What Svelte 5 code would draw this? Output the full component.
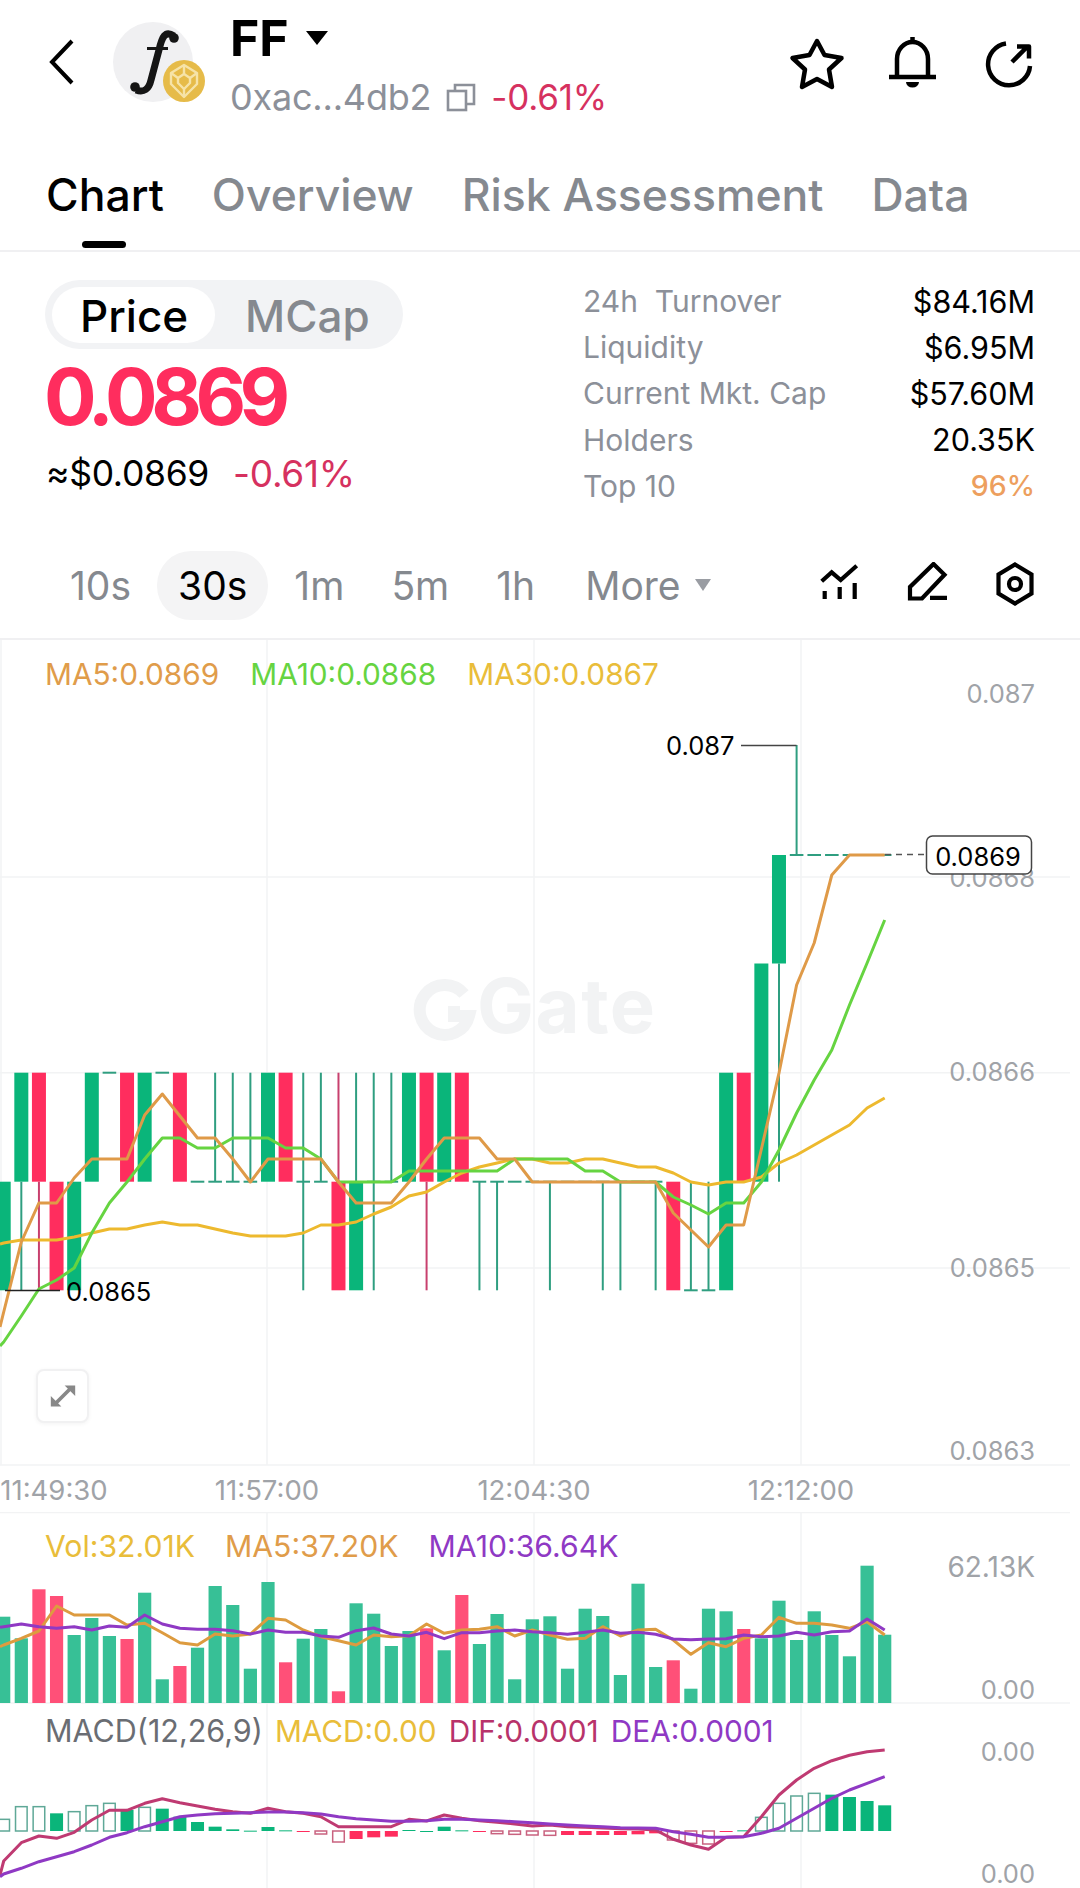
<script>
  const X = (k) => 3.7 + 17.62 * k;
  const L0 = 855, L1 = 963.5, L2 = 1072.7, L3 = 1181.7, L4 = 1290.3;
  const G = '#0ab57a', R = '#ff2d5e', GW = '#2f9e80', RW = '#c8406e';
  // [colour, bodyTop, bodyBottom, wickTop, wickBottom]
  const c = (col, a, b, wa, wb) => ({ col, a, b, wa, wb });
  const candles = [
    c('g',L3,L4), c('g',L2,L3,L3,L4), c('r',L2,L3,L3,L4), c('r',L3,L4), c('g',L3,L4), c('g',L2,L3),
    c('g',L2,L2), c('r',L2,L3), c('g',L2,L3), c('g',L2,L2), c('r',L2,L3), c('g',L3,L3),
    c('g',L3,L3,L2,L3), c('g',L3,L3,L2,L3), c('g',L3,L3,L2,L3), c('g',L2,L3), c('r',L2,L3),
    c('g',L3,L3,L2,L4), c('g',L3,L3,L2,L3), c('r',L3,L4,L2,L3), c('g',L3,L4,L2,L3),
    c('g',L3,L3,L2,L4), c('g',L3,L3,L2,L3), c('g',L2,L3), c('r',L2,L3,L3,L4), c('g',L2,L3), c('r',L2,L3),
    c('g',L3,L3,L3,L4), c('g',L3,L3,L3,L4), c('g',L3,L3), c('g',L3,L3), c('g',L3,L3,L3,L4), c('g',L3,L3), c('g',L3,L3),
    c('g',L3,L3,L3,L4), c('g',L3,L3,L3,L4), c('g',L3,L3), c('g',L3,L3,L3,L4), c('r',L3,L4),
    c('g',L4,L4,L3,L4), c('g',L4,L4,L3,L4), c('g',L2,L4), c('r',L2,L3), c('g',L1,L3), c('g',L0,L1,L1,L3),
    c('g',L0,L0,745,L0), c('g',L0,L0), c('g',L0,L0), c('g',L0,L0), c('g',L0,L0), c('g',L0,L0)
  ];
  // first value sits at the left edge (x=0), the rest one per candle
  const pts = (first, arr) => `0,${first} ` + arr.map((y, k) => `${X(k).toFixed(1)},${y}`).join(' ');
  const ma5 = [1312,1242,1203,1203,1178,1159,1159,1159,1115,1094,1116,1138,1138,1159,1182,1159,1159,1159,1159,1182,1203,1203,1203,1182,1159,1138,1138,1138,1159,1159,1182,1182,1182,1182,1182,1182,1182,1182,1213,1230,1247,1225,1225,1149,1073,985,943,875,855,855,855];
  const ma10 = [1342,1316,1289,1280,1268,1233,1203,1182,1159,1138,1138,1148,1148,1138,1138,1138,1148,1148,1159,1182,1182,1182,1182,1171,1171,1171,1171,1171,1171,1159,1159,1159,1159,1171,1171,1182,1182,1182,1197,1205,1214,1203,1203,1182,1150,1113,1080,1050,1005,963,920];
  const ma30 = [1243,1240,1240,1240,1237,1233,1229,1229,1225,1222,1225,1225,1229,1233,1236,1236,1236,1233,1225,1225,1222,1214,1207,1196,1192,1182,1173,1167,1163,1159,1159,1163,1163,1159,1159,1163,1167,1167,1173,1182,1185,1182,1182,1177,1163,1155,1145,1135,1125,1108,1098];

  const zv = (z) => +(1500 + z / 3).toFixed(1);
  const volRed = new Set([2,3,7,10,16,19,24,26,38,42]);
  const vols = [350,415,268,288,405,354,408,417,278,538,498,443,258,315,506,246,487,416,387,574,310,341,438,393,385,451,285,432,342,538,358,349,506,326,348,525,251,501,481,566,326,334,387,415,302,420,334,405,469,197,404].map(zv);
  const vma5 = [435,415,393,318,345,345,345,375,370,398,428,435,402,408,402,355,360,390,410,422,435,405,410,407,372,400,390,388,380,408,390,405,418,415,380,408,390,388,420,463,428,440,415,405,352,370,370,375,385,365,405].map(zv);
  const vma10 = [380,372,380,385,380,390,378,382,345,372,385,388,388,392,402,390,397,397,408,412,392,384,402,408,397,416,398,398,393,390,395,398,403,397,390,400,397,403,417,419,417,416,405,410,408,397,405,395,393,357,390].map(zv);

  // [z value, hollow?]; values below the base are red, above are green
  const BASE = 993;
  const macd = [[958,1],[920,1],[920,1],[940,0],[935,1],[917,1],[910,1],[930,0],[922,1],[926,0],[950,0],[966,0],[980,0],[988,0],[992,0],[981,0],[991,0],[996,0],[1002,1],[1026,1],[1017,0],[1012,0],[1010,0],[990,0],[993,0],[980,0],[991,0],[996,0],[1001,1],[1003,1],[1005,1],[1006,1],[1005,0],[1005,0],[1005,0],[1005,0],[1003,0],[1000,0],[1020,1],[1030,1],[1032,1],[996,0],[991,0],[952,1],[910,1],[888,1],[880,1],[884,0],[891,0],[903,0],[916,0]];
  const dif = [1083,1028,1008,1015,997,960,931,931,910,896,908,918,928,935,940,925,935,940,950,980,980,980,980,958,963,945,955,962,967,972,978,975,980,982,984,986,987,990,1018,1035,1048,1012,1010,950,885,840,805,782,766,755,750].map(zv);
  const dea = [1122,1105,1085,1070,1055,1035,1012,998,980,965,950,945,941,940,938,936,936,938,942,950,956,960,964,964,962,958,958,960,962,965,968,972,975,978,980,983,984,985,995,1003,1012,1012,1010,1000,985,955,925,895,870,850,830].map(zv);

  const stats = [
    ['24h  Turnover', '$84.16M', ''],
    ['Liquidity', '$6.95M', ''],
    ['Current Mkt. Cap', '$57.60M', ''],
    ['Holders', '20.35K', ''],
    ['Top 10', '96%', 'warn']
  ];
  const grids = [267, 534, 801];
</script>

<div class="page">
  <header class="top">
    <svg class="back" viewBox="0 0 28 46" aria-hidden="true"><path d="M24 2 4 23l20 21" /></svg>
    <div class="avatar">
      <svg viewBox="0 0 100 90" aria-hidden="true">
        <circle cx="41" cy="42" r="40" fill="#f0f0f2" />
        <g fill="none" stroke="#151515">
          <path d="M62 16C53 10 50 17 47 30L39 60C37 69 32 73 24 70" stroke-width="7" />
          <path d="M35 28.500h21" stroke-width="3" />
        </g>
        <circle cx="62" cy="18" r="4.800" fill="#151515" />
        <circle cx="23" cy="67" r="4.800" fill="#151515" />
        <circle cx="72" cy="61" r="21" fill="#e6bb49" />
        <g fill="none" stroke="#f6e3a8" stroke-width="2.400" stroke-linejoin="round">
          <path d="M72 45l13 8v11l-13 13-13-13V53z" />
          <path d="M72 54l6 4v5l-6 6-6-6v-5z" />
          <path d="M59 53l7 5M85 53l-7 5M72 45v9M72 69v8" />
        </g>
      </svg>
    </div>
    <div class="title">
      <div class="sym"><span>FF</span><i class="tri"></i></div>
      <div class="addr">
        <span>0xac...4db2</span>
        <svg class="copy" viewBox="0 0 30 29" aria-hidden="true">
          <rect x="2" y="8" width="18" height="19" /><path d="M9 8V2h19v19h-7" />
        </svg>
        <span class="chg">-0.61%</span>
      </div>
    </div>
    <div class="acts">
      <svg viewBox="0 0 60 60" aria-hidden="true"><path d="M30 9l7.500 14 17 3-12.500 11.500 3 17.500-15-8-15 8 3-17.500L5.500 26l17-3z" /></svg>
      <svg viewBox="0 0 60 60" aria-hidden="true">
        <path d="M14 44V27a15.500 17 0 0 1 31 0v17M6 45h47" /><path d="M29.500 5v3" />
        <path class="fill" d="M23 50h13a6.500 5.500 0 0 1-13 0z" />
      </svg>
      <svg viewBox="0 0 60 60" aria-hidden="true">
        <path d="M27 11.500A21 21 0 1 0 51 34" /><path d="M33 30l15-15M38 14.500h12v12" />
      </svg>
    </div>
  </header>

  <nav class="tabs">
    <span class="tab on">Chart</span>
    <span class="tab">Overview</span>
    <span class="tab">Risk Assessment</span>
    <span class="tab">Data</span>
  </nav>

  <section class="summary">
    <div class="left">
      <div class="toggle"><span class="seg on">Price</span><span class="seg">MCap</span></div>
      <div class="bigprice">0.0869</div>
      <div class="usd"><span>≈$0.0869</span><span class="chg">-0.61%</span></div>
    </div>
    <dl class="stats">
      {#each stats as s}
        <div class="row"><dt>{s[0]}</dt><dd class={s[2]}>{s[1]}</dd></div>
      {/each}
    </dl>
  </section>

  <div class="frames">
    <span class="fr">10s</span><span class="fr on">30s</span><span class="fr">1m</span><span class="fr">5m</span><span class="fr">1h</span>
    <span class="fr more">More<i class="tri small"></i></span>
    <div class="tools">
      <svg viewBox="0 0 40 40" aria-hidden="true"><path d="M2.700 19.300 12.700 10.300 21.700 18 37.700 3.700M5.700 29v8M20.700 25v12M35.700 21v16" /></svg>
      <svg viewBox="0 0 42 40" aria-hidden="true"><path d="M3 36.500V25L26.500 2l11 10.700L15 36.500zM23 35.800h17" /></svg>
      <svg viewBox="0 0 40 44" aria-hidden="true"><path d="M20 2.500l16.500 10v19L20 41.500l-16.500-10v-19z" /><circle cx="20" cy="22" r="6" /></svg>
    </div>
  </div>

  <section class="panel main">
    <div class="legend l-main">
      <span class="o">MA5:0.0869</span><span class="gr">MA10:0.0868</span><span class="y">MA30:0.0867</span>
    </div>
    <svg viewBox="0 640 1080 872" width="1080" height="872">
      {#each grids as g}<line x1={g} x2={g} y1="640" y2="1465" class="grid" />{/each}
      <line x1="1" x2="1" y1="640" y2="1465" class="grid" />
      {#each [877, 1072.700, 1268, 1465] as g}<line x1="0" x2="1070" y1={g} y2={g} class="grid" />{/each}

      <text x="477" y="1033" class="wm">Gate</text>
      <path d="M464 994a25 25 0 1 0 5 22h-15v-10" class="wmg" />

      {#each candles as d, k}
        {#if d.wa}<line x1={X(k)} x2={X(k)} y1={d.wa} y2={d.wb} stroke={d.col === 'r' ? RW : GW} stroke-width="2" />{/if}
        {#if d.a === d.b}
          <line x1={X(k) - 6.800} x2={X(k) + 6.800} y1={d.a} y2={d.a} stroke={GW} stroke-width="2" />
        {:else}
          <rect x={X(k) - 7} y={d.a} width="14" height={d.b - d.a} fill={d.col === 'r' ? R : G} />
        {/if}
      {/each}

      <polyline points={pts(1244, ma30)} class="ln" stroke="#edb92e" />
      <polyline points={pts(1346, ma10)} class="ln" stroke="#66d441" />
      <polyline points={pts(1327, ma5)} class="ln" stroke="#df9a48" />

      <path d="M741 745.500h55.500" stroke="#444" stroke-width="1.500" fill="none" />
      <text x="666" y="755" class="note">0.087</text>
      <line x1="5" x2="60" y1="1290.500" y2="1290.500" stroke="#222" stroke-width="1.500" />
      <text x="66" y="1301" class="note">0.0865</text>

      <text x="1035" y="703" class="ax" text-anchor="end">0.087</text>
      <text x="1035" y="887" class="ax" text-anchor="end">0.0868</text>
      <text x="1035" y="1081" class="ax" text-anchor="end">0.0866</text>
      <text x="1035" y="1277" class="ax" text-anchor="end">0.0865</text>
      <text x="1035" y="1460" class="ax" text-anchor="end">0.0863</text>

      <line x1="885" x2="926" y1="854.500" y2="854.500" stroke="#555" stroke-width="1.500" stroke-dasharray="6 5" />
      <rect x="926.500" y="836" width="105" height="38" rx="6" fill="#fff" stroke="#444" stroke-width="1.500" />
      <text x="978" y="866" class="note" text-anchor="middle">0.0869</text>

      <text x="54" y="1500" class="tm" text-anchor="middle">11:49:30</text>
      <text x="267" y="1500" class="tm" text-anchor="middle">11:57:00</text>
      <text x="534" y="1500" class="tm" text-anchor="middle">12:04:30</text>
      <text x="801" y="1500" class="tm" text-anchor="middle">12:12:00</text>
    </svg>
    <button class="expand" aria-label="Expand">
      <svg viewBox="0 0 32 32" aria-hidden="true">
        <path d="M18 3h13v13zM1 16v13h13z" fill="#888" /><path d="M8 24 24 8" stroke="#888" stroke-width="4.500" />
      </svg>
    </button>
  </section>

  <section class="panel">
    <div class="legend l-vol">
      <span class="y">Vol:32.01K</span><span class="o">MA5:37.20K</span><span class="p">MA10:36.64K</span>
    </div>
    <svg viewBox="0 1512 1080 201" width="1080" height="201">
      {#each grids as g}<line x1={g} x2={g} y1="1512" y2="1713" class="grid" />{/each}
      <line x1="0" x2="1070" y1="1512.500" y2="1512.500" class="grid" />
      <line x1="0" x2="1070" y1="1703" y2="1703" class="grid" />
      {#each vols as y, k}
        <rect x={X(k) - 6.600} y={y} width="13.200" height={1703 - y} fill={volRed.has(k) ? '#ff5078' : '#37c096'} />
      {/each}
      <polyline points={pts(zv(440), vma5)} class="ln" stroke="#dd9b3f" />
      <polyline points={pts(zv(382), vma10)} class="ln" stroke="#8f39c4" />
      <text x="1035" y="1577" class="ax wide" text-anchor="end">62.13K</text>
      <text x="1035" y="1699" class="ax" text-anchor="end">0.00</text>
    </svg>
  </section>

  <section class="panel">
    <div class="legend l-macd">
      <span class="k">MACD(12,26,9)</span><span class="y">MACD:0.00</span><span class="d">DIF:0.0001</span><span class="p">DEA:0.0001</span>
    </div>
    <svg viewBox="0 1713 1080 175" width="1080" height="175">
      {#each grids as g}<line x1={g} x2={g} y1="1713" y2="1888" class="grid" />{/each}
      {#each macd as m, k}
        {@const top = 1500 + Math.min(m[0], BASE) / 3}
        {@const bot = 1500 + Math.max(m[0], BASE) / 3}
        {@const red = m[0] > BASE}
        {#if m[1]}
          <rect x={X(k) - 5.800} y={top} width="11.600" height={bot - top} fill="#fff" stroke={red ? '#c9627f' : '#5fa897'} stroke-width="1.500" />
        {:else}
          <rect x={X(k) - 6.500} y={top} width="13" height={Math.max(bot - top, 1)} fill={red ? R : G} />
        {/if}
      {/each}
      <polyline points={pts(zv(1125), dif)} class="ln" stroke="#bf3a72" />
      <polyline points={pts(zv(1130), dea)} class="ln" stroke="#8f39c4" />
      <text x="1035" y="1761" class="ax" text-anchor="end">0.00</text>
      <text x="1035" y="1883" class="ax" text-anchor="end">0.00</text>
    </svg>
  </section>
</div>

<style>
  :global(body) { margin: 0; background: #fff; }
  .page { width: 1080px; height: 1888px; overflow: hidden; font-family: Inter, "Liberation Sans", sans-serif; color: #000; background: #fff; }

  .top { height: 130px; display: flex; align-items: flex-start; box-sizing: border-box; position: relative; }
  .back { width: 28px; height: 46px; margin: 39px 0 0 48px; flex: none; fill: none; stroke: #000; stroke-width: 4; }
  .avatar { width: 100px; height: 90px; margin: 20px 0 0 36px; flex: none; }
  .avatar svg { display: block; width: 100%; height: 100%; }
  .title { margin: 7px 0 0 18px; flex: none; }
  .sym { display: flex; align-items: flex-start; height: 70px; font-size: 50px; font-weight: 700; line-height: 62px; }
  .tri { display: block; width: 0; height: 0; border-left: 11.500px solid transparent; border-right: 11.500px solid transparent; border-top: 14px solid #000; margin: 24px 0 0 17px; }
  .tri.small { border-left-width: 8.500px; border-right-width: 8.500px; border-top: 12px solid #9a9da3; margin: 0 0 0 14px; }
  .addr { display: flex; align-items: center; font-size: 36px; height: 40px; color: #8c9099; letter-spacing: -0.2px; }
  .copy { width: 30px; height: 29px; margin: 0 15px 0 15px; fill: none; stroke: #8c9099; stroke-width: 2.600; }
  .chg { color: #d6315f; }
  .addr .chg { font-size: 35px; }
  .acts { position: absolute; top: 32px; left: 787px; display: flex; gap: 36px; }
  .acts svg { width: 60px; height: 60px; fill: none; stroke: #000; stroke-width: 4.500; stroke-linejoin: round; }
  .acts .fill { fill: #000; stroke: none; }

  .tabs { height: 122px; box-sizing: border-box; display: flex; gap: 48px; padding: 38px 0 0 46px; border-bottom: 2px solid #f0f0f2; font-size: 44.500px; font-weight: 500; line-height: 54px; color: #85898f; }
  .tab { position: relative; }
  .tab.on { color: #000; }
  .tab.on::after { content: ""; position: absolute; left: 36px; width: 44px; height: 7px; top: 73px; border-radius: 4px; background: #000; }

  .summary { height: 280px; box-sizing: border-box; display: flex; padding-top: 26px; }
  .left { width: 584px; padding-left: 45px; box-sizing: border-box; padding-top: 2px; }
  .toggle { width: 358px; height: 69px; box-sizing: border-box; padding: 7px; display: flex; border-radius: 35px; background: #f2f3f5; font-size: 44px; font-weight: 500; line-height: 58px; }
  .seg { color: #85898f; padding-left: 30px; }
  .seg.on { color: #000; width: 163px; height: 56px; box-sizing: border-box; padding-left: 28px; border-radius: 28px; background: #fff; }
  .bigprice { margin: 3px 0 0 -1px; font-size: 78px; line-height: 90px; font-weight: 700; color: #ff2d5e; letter-spacing: -6.500px; }
  .usd { display: flex; gap: 24px; margin: 10px 0 0 1px; font-size: 35.500px; line-height: 44px; letter-spacing: -0.3px; }
  .usd .chg { font-size: 37px; }
  .stats { margin: 0 0 0 -1px; width: 452px; display: flex; flex-direction: column; }
  .row { display: flex; justify-content: space-between; height: 46.200px; align-items: center; font-size: 30px; }
  dt { color: #8c9099; white-space: pre; }
  dd { margin: 0; font-size: 30.500px; }
  dd.warn { color: #ed9f5e; font-size: 28.500px; font-weight: 500; }

  .frames { height: 108px; display: flex; align-items: center; gap: 47px; position: relative; font-size: 39px; color: #85898f; border-bottom: 2px solid #f0f0f2; box-sizing: border-box; padding-left: 70px; }
  .fr { line-height: 69px; }
  .fr.on { color: #000; background: #f4f4f5; border-radius: 34px; padding: 0 21px; margin: 0 -21px; }
  .fr.more { display: flex; align-items: center; margin-left: 3px; }
  .tools { position: absolute; top: 30px; left: 819px; width: 216px; height: 44px; }
  .tools svg { position: absolute; top: 0; fill: none; stroke: #000; stroke-width: 4.200; }
  .tools svg:nth-child(1) { left: 0; width: 40px; height: 40px; }
  .tools svg:nth-child(2) { left: 88px; width: 42px; height: 40px; }
  .tools svg:nth-child(3) { left: 176px; width: 40px; height: 44px; }

  .panel { position: relative; width: 1080px; }
  .panel svg { display: block; }
  .grid { stroke: #f2f3f4; stroke-width: 1.500; }
  .ln { fill: none; stroke-width: 3; stroke-linejoin: round; }
  .ax { font-size: 25.500px; fill: #a0a3a8; font-family: Inter, sans-serif; }
  .ax.wide { font-size: 28px; }
  .tm { font-size: 27.500px; fill: #a0a3a8; font-family: Inter, sans-serif; }
  .note { font-size: 25.500px; fill: #000; font-family: Inter, sans-serif; }
  .wm { font-size: 76px; font-weight: 700; fill: #f2f3f4; font-family: Inter, sans-serif; letter-spacing: 1.500px; }
  .wmg { fill: none; stroke: #f2f3f4; stroke-width: 12px; }

  .legend { position: absolute; left: 45px; display: flex; line-height: 34px; white-space: nowrap; }
  .l-main { top: 17px; gap: 31px; font-size: 29.800px; }
  .l-vol { top: 17px; gap: 30px; font-size: 30.200px; }
  .l-macd { top: 1px; gap: 12px; font-size: 29.800px; }
  .l-macd .k { font-size: 30.500px; }
  .o { color: #e09c4a; }
  .gr { color: #66d441; }
  .y { color: #e9bd3a; }
  .p { color: #8f39c4; }
  .d { color: #b8336a; }
  .k { color: #6a6d73; }

  .expand { position: absolute; left: 36px; top: 729px; width: 53px; height: 54px; padding: 0; display: flex; align-items: center; justify-content: center; background: #fff; border: 2px solid #f1f1f2; border-radius: 8px; box-shadow: 0 1px 4px rgba(0,0,0,.05); }
  .expand svg { width: 26px; height: 26px; }
</style>
